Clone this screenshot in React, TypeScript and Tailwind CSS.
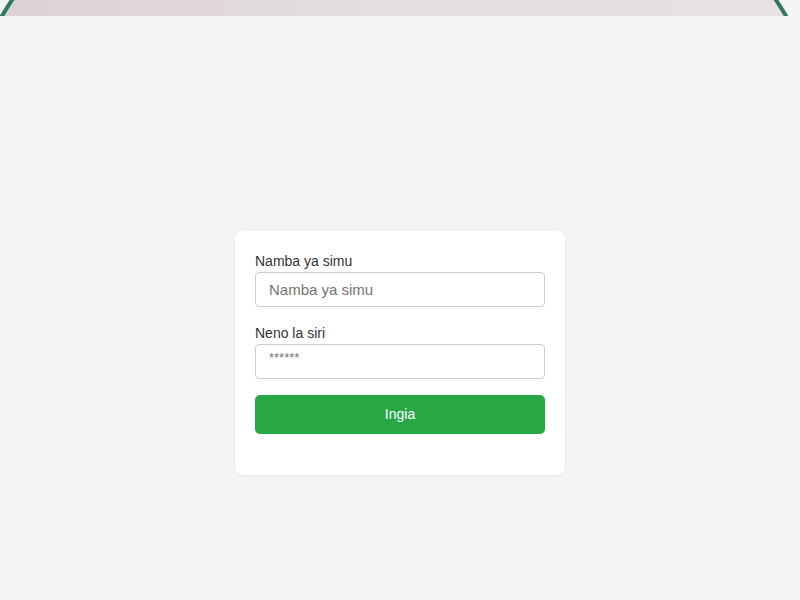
export default function App() {
  return (
    <div className="min-h-[600px] bg-[#f3f4f3] font-['Liberation_Sans',Arial,sans-serif]">
      {/* clipped decorative hero ring */}
      <div className="relative h-4 overflow-hidden">
        <div className="absolute left-[-65px] top-[-208px] h-[918px] w-[918px] rounded-full border-4 border-[#2f7a5f] bg-gradient-to-r from-[#dccfd1] via-[#e3dfe0] to-[#e7e2e4]" />
      </div>

      <div className="flex justify-center pt-[215px]">
        <form className="w-[330px] rounded-lg bg-white px-5 pb-[41px] pt-5 shadow-[0_1px_4px_rgba(0,0,0,0.06)]">
          <label className="mb-px block text-[14px] leading-5 text-[#333]">Namba ya simu</label>
          <input
            type="text"
            placeholder="Namba ya simu"
            className="block h-[35px] w-full rounded border border-[#ccc] px-[13px] text-[15px] text-[#333] placeholder:text-[#757575] focus:outline-none"
          />

          <label className="mb-px mt-4 block text-[14px] leading-5 text-[#333]">Neno la siri</label>
          <input
            type="password"
            placeholder="******"
            className="block h-[35px] w-full rounded border border-[#ccc] px-[13px] pb-2 text-[13px] text-[#333] placeholder:text-[#757575] focus:outline-none"
          />

          <button
            type="button"
            className="mt-4 block h-[39px] w-full rounded-[5px] bg-[#28a745] text-[14px] text-white"
          >
            Ingia
          </button>
        </form>
      </div>
    </div>
  );
}
